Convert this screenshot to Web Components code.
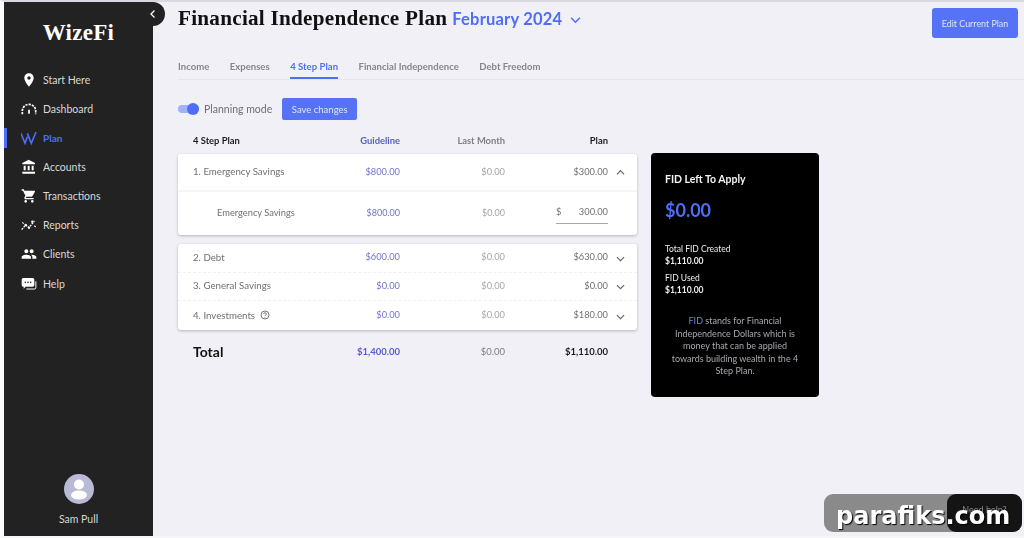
<!DOCTYPE html>
<html>
<head>
<meta charset="utf-8">
<title>WizeFi</title>
<style>
	html, body { margin: 0; height: 100%; }
	body {
		background: #f0f0f6;
		font-family: "Lato", "Liberation Sans", sans-serif;
		overflow: hidden;
	}
</style>
</head>
<body>
<wf-app>
	<wf-sidebar slot="side" user="Sam Pull">
		<wf-nav-item icon="pin">Start Here</wf-nav-item>
		<wf-nav-item icon="gauge">Dashboard</wf-nav-item>
		<wf-nav-item icon="logo" active>Plan</wf-nav-item>
		<wf-nav-item icon="bank">Accounts</wf-nav-item>
		<wf-nav-item icon="cart">Transactions</wf-nav-item>
		<wf-nav-item icon="chart">Reports</wf-nav-item>
		<wf-nav-item icon="people">Clients</wf-nav-item>
		<wf-nav-item icon="chat">Help</wf-nav-item>
	</wf-sidebar>
	<wf-page-header></wf-page-header>
	<wf-tabs></wf-tabs>
	<wf-toolbar></wf-toolbar>
	<div class="content" slot="content">
		<wf-plan-table></wf-plan-table>
		<wf-fid-card></wf-fid-card>
	</div>
</wf-app>
<wf-watermark></wf-watermark>

<script>
const ICONS = {
	pin: `<path fill="#fff" d="M12 2C8.13 2 5 5.13 5 9c0 5.25 7 13 7 13s7-7.75 7-13c0-3.87-3.13-7-7-7zm0 9.5c-1.38 0-2.5-1.12-2.5-2.5s1.12-2.5 2.5-2.5 2.5 1.12 2.5 2.5-1.12 2.5-2.5 2.5z"/>`,
	gauge: `<path fill="none" stroke="#fff" stroke-width="2.6" stroke-dasharray="3.4 1.6" d="M2 20v-5a10 10 0 0 1 20 0v5"/><path fill="none" stroke="#fff" stroke-width="2.6" d="M12 13v6"/>`,
	logo: `<path fill="none" stroke="#4f6ef7" stroke-width="2.4" d="M0 5l6 15 3.500-10M9.500 5l6 15 7-17"/>`,
	bank: `<path fill="#fff" d="M4 10v7h3v-7H4zm6 0v7h3v-7h-3zM2 22h19v-3H2v3zm14-12v7h3v-7h-3zm-4.500-9L2 6v2h19V6l-9.500-5z"/>`,
	cart: `<path fill="#fff" d="M7 18c-1.100 0-1.990.9-1.990 2S5.900 22 7 22s2-.9 2-2-.9-2-2-2zM1 2v2h2l3.600 7.590-1.350 2.450c-.16.28-.25.61-.25.96 0 1.100.9 2 2 2h12v-2H7.420c-.14 0-.25-.11-.25-.25l.03-.12.9-1.630h7.450c.75 0 1.410-.41 1.750-1.030l3.580-6.490c.08-.14.12-.31.12-.48 0-.55-.45-1-1-1H5.210l-.94-2H1zM17 18c-1.100 0-1.990.9-1.990 2s.89 2 1.990 2 2-.9 2-2-.9-2-2-2z"/>`,
	chart: `<path fill="none" stroke="#fff" stroke-width="2" stroke-dasharray="3 1.500" d="M1 19l6-7 5 4 8-10"/><circle cx="7" cy="12" r="1.800" fill="#fff"/><circle cx="12" cy="16" r="1.800" fill="#fff"/><circle cx="17" cy="7" r="1.800" fill="#fff"/><path stroke="#fff" stroke-width="1.600" d="M2 8l2 2M22 15l-2-2"/>`,
	people: `<path fill="#fff" d="M16 11c1.660 0 2.990-1.340 2.990-3S17.660 5 16 5c-1.660 0-3 1.340-3 3s1.340 3 3 3zm-8 0c1.660 0 2.990-1.340 2.990-3S9.660 5 8 5C6.340 5 5 6.340 5 8s1.340 3 3 3zm0 2c-2.330 0-7 1.170-7 3.500V19h14v-2.500c0-2.330-4.670-3.500-7-3.500zm8 0c-.29 0-.62.02-.97.05 1.160.84 1.970 1.970 1.970 3.450V19h6v-2.500c0-2.330-4.670-3.500-7-3.500z"/>`,
	chat: `<path fill="#fff" d="M3.500 3h14A2.500 2.500 0 0 1 20 5.500v8a2.500 2.500 0 0 1-2.500 2.500H7l-3 3v-3.100A2.500 2.500 0 0 1 1 13.500v-8A2.500 2.500 0 0 1 3.500 3z"/><path fill="none" stroke="#fff" stroke-width="1.500" d="M22.300 8v9.500a2 2 0 0 1-2 2H8"/><g fill="#222"><circle cx="6.500" cy="9.500" r="1.200"/><circle cx="10.500" cy="9.500" r="1.200"/><circle cx="14.500" cy="9.500" r="1.200"/></g>`
};

const CHEVRON = (dir, size = 9, color = "#666") => {
	const d = { up: "M1 7l4-4 4 4", down: "M1 3.500l4 4 4-4", left: "M6.500 1.500L3 5l3.500 3.500" }[dir];
	return `<svg width="${size}" height="${size}" viewBox="0 0 10 10"><path fill="none" stroke="${color}" stroke-width="1.300" d="${d}"/></svg>`;
};

// shell: sidebar on the left, everything else in a column
class WfApp extends HTMLElement {
	constructor() {
		super();
		this.attachShadow({ mode: "open" }).innerHTML = `
			<style>
				:host {
					display: flex;
					height: 538px;
					box-sizing: border-box;
					border-top: 2px solid #d8d8df;
					border-left: 4px solid #fbfbfd;
					border-bottom: 2px solid #f6f6f9;
					filter: blur(.35px);
				}
				main { flex: 1; min-width: 0; display: flex; flex-direction: column; }
				::slotted(.content) { display: flex; gap: 14px; align-items: flex-start; padding-left: 25px; }
			</style>
			<slot name="side"></slot>
			<main><slot></slot><slot name="content"></slot></main>`;
	}
}

class WfSidebar extends HTMLElement {
	constructor() {
		super();
		const user = this.getAttribute("user");
		this.attachShadow({ mode: "open" }).innerHTML = `
			<style>
				:host {
					display: flex;
					flex-direction: column;
					position: relative;
					flex: 0 0 149px;
					background: #222222;
					color: #e8e8e8;
				}
				.collapse {
					position: absolute;
					top: 0;
					right: -12px;
					width: 24px;
					height: 24px;
					border-radius: 0 12px 12px 0;
					background: #222222;
					display: flex;
					align-items: center;
					justify-content: center;
				}
				.brand {
					font: 700 23px/1 "Liberation Serif", serif;
					color: #fff;
					text-align: center;
					margin: 19px 0 21px;
					letter-spacing: .3px;
				}
				nav { display: flex; flex-direction: column; }
				.user {
					margin-top: auto;
					padding-bottom: 11px;
					display: flex;
					flex-direction: column;
					align-items: center;
					gap: 9px;
					font-size: 10.500px;
					color: #d6d6d6;
				}
				.avatar { width: 30px; height: 30px; display: block; }
			</style>
			<div class="collapse">${CHEVRON("left", 10, "#fff")}</div>
			<div class="brand">WizeFi</div>
			<nav><slot></slot></nav>
			<div class="user">
				<svg class="avatar" viewBox="0 0 30 30">
					<circle cx="15" cy="15" r="15" fill="#b9bbd6"/>
					<circle cx="15" cy="10.500" r="5" fill="#fff"/>
					<ellipse cx="15" cy="21" rx="8" ry="4.500" fill="#fff"/>
				</svg>
				<span>${user}</span>
			</div>`;
	}
}

class WfNavItem extends HTMLElement {
	constructor() {
		super();
		const icon = this.getAttribute("icon");
		this.attachShadow({ mode: "open" }).innerHTML = `
			<style>
				:host {
					display: flex;
					align-items: center;
					gap: 6px;
					height: 29.150px;
					padding-left: 17px;
					font-size: 10.500px;
					color: #d9d9d9;
					box-sizing: border-box;
				}
				:host([active]) {
					color: #4f6ef7;
					font-weight: 700;
					font-size: 10px;
					background: linear-gradient(#4f6ef7, #4f6ef7) left center / 3px 20px no-repeat;
				}
				svg { width: 16px; height: 16px; flex: none; }
			</style>
			<svg viewBox="0 0 24 24">${ICONS[icon]}</svg>
			<slot></slot>`;
	}
}

class WfPageHeader extends HTMLElement {
	constructor() {
		super();
		this.attachShadow({ mode: "open" }).innerHTML = `
			<style>
				:host {
					display: flex;
					align-items: flex-start;
					justify-content: space-between;
					height: 44px;
					padding: 3px 6px 0 25px;
				}
				.title { display: flex; align-items: baseline; gap: 5px; }
				h1 {
					margin: 0;
					font: 700 21.200px/26px "Liberation Serif", serif;
					color: #111;
					letter-spacing: .25px;
				}
				.month {
					font-size: 16.500px;
					font-weight: 700;
					color: #4f6ef7;
					letter-spacing: .2px;
				}
				.chev { margin-left: 3px; }
				button {
					width: 86px;
					height: 30px;
					margin-top: 3px;
					border: 0;
					border-radius: 3px;
					background: #5673f8;
					color: #dfe4ff;
					font: 400 8.900px "Lato", sans-serif;
					padding: 0;
				}
			</style>
			<div class="title">
				<h1>Financial Independence Plan</h1>
				<span class="month">February 2024</span>
				<span class="chev">${CHEVRON("down", 11, "#4f6ef7")}</span>
			</div>
			<button>Edit Current Plan</button>`;
	}
}

class WfTabs extends HTMLElement {
	constructor() {
		super();
		const tabs = ["Income", "Expenses", "4 Step Plan", "Financial Independence", "Debt Freedom"];
		this.attachShadow({ mode: "open" }).innerHTML = `
			<style>
				:host {
					display: flex;
					gap: 20.500px;
					height: 30px;
					margin-left: 25px;
					border-bottom: 1px solid #e6e6ec;
					font-size: 9.500px;
					font-weight: 700;
					color: #85858c;
					letter-spacing: .03px;
				}
				span { padding-top: 12px; height: 16px; line-height: 12px; }
				.on { color: #4f6ef7; border-bottom: 2px solid #4f6ef7; }
			</style>
			${tabs.map(t => `<span class="${t === "4 Step Plan" ? "on" : ""}">${t}</span>`).join("")}`;
	}
}

class WfToolbar extends HTMLElement {
	constructor() {
		super();
		this.attachShadow({ mode: "open" }).innerHTML = `
			<style>
				:host {
					display: flex;
					align-items: center;
					height: 22px;
					margin: 18px 0 0 25px;
					font-size: 10.500px;
					color: #6e6e74;
				}
				.track {
					position: relative;
					width: 21px;
					height: 8px;
					border-radius: 4px;
					background: #a3b2f6;
					margin-right: 5px;
				}
				.thumb {
					position: absolute;
					right: 0;
					top: -2px;
					width: 12px;
					height: 12px;
					border-radius: 50%;
					background: #4f6ef7;
				}
				button {
					width: 75px;
					height: 22px;
					margin-left: 10px;
					border: 0;
					border-radius: 2px;
					background: #5673f8;
					color: #e1e6ff;
					font: 400 9.500px "Lato", sans-serif;
					padding: 0;
				}
			</style>
			<span class="track"><span class="thumb"></span></span>
			<span>Planning mode</span>
			<button>Save changes</button>`;
	}
}

class WfPlanRow extends HTMLElement {
	constructor() {
		super();
		const a = n => this.getAttribute(n) || "";
		const kind = a("kind");
		const help = this.hasAttribute("help")
			? `<svg class="help" width="10" height="10" viewBox="0 0 10 10"><circle cx="5" cy="5" r="4" fill="none" stroke="#555" stroke-width=".8"/><path fill="none" stroke="#555" stroke-width=".8" d="M3.700 4a1.300 1.300 0 1 1 1.800 1.200c-.4.2-.5.4-.5.8"/><circle cx="5" cy="7.300" r=".5" fill="#555"/></svg>`
			: "";
		const plan = kind === "sub"
			? `<span class="input"><i>$</i><b>${a("plan")}</b></span>`
			: `<span class="num plan">${a("plan")}</span>`;
		const chev = a("chev") ? CHEVRON(a("chev")) : "";
		this.attachShadow({ mode: "open" }).innerHTML = `
			<style>
				:host {
					display: grid;
					grid-template-columns: 107px 100px 105px 103px 29px;
					align-items: center;
					box-sizing: border-box;
					padding: 0 0 2px 15px;
					height: 28.670px;
					font-size: 9.700px;
					color: #6f6f75;
				}
				:host([kind="open"]) { height: 38px; border-bottom: 2px solid #f5f5f8; }
				:host([kind="sub"]) { height: 43px; }
				:host([line]) { border-bottom: 1px dashed #f0f0f3; }
				.label { white-space: nowrap; display: flex; align-items: center; gap: 5px; }
				:host([kind="sub"]) .label { padding-left: 24px; font-size: 9.300px; }
				.num { text-align: right; font-size: 9.300px; }
				.guide { color: #7272cf; }
				.last { color: #a6a6ab; }
				:host([kind="sub"]) .guide, :host([kind="sub"]) .last { font-size: 9px; }
				.input {
					justify-self: end;
					width: 52px;
					height: 17px;
					margin-top: 5px;
					display: flex;
					justify-content: space-between;
					border-bottom: 1px solid #aaa;
					font-size: 9.300px;
				}
				.input i { font-style: normal; }
				.input b { font-weight: 400; }
				.chev { display: flex; justify-content: center; padding: 3px 4px 0 0; }
			</style>
			<span class="label">${a("label")}${help}</span>
			<span class="num guide">${a("guide")}</span>
			<span class="num last">${a("last")}</span>
			${plan}
			<span class="chev">${chev}</span>`;
	}
}

class WfPlanTable extends HTMLElement {
	constructor() {
		super();
		this.attachShadow({ mode: "open" }).innerHTML = `
			<style>
				:host { display: block; width: 459px; margin-top: 7px; }
				.cols, .total {
					display: grid;
					grid-template-columns: 107px 100px 105px 103px 29px;
					padding-left: 15px;
					align-items: center;
				}
				.cols { height: 27px; font-size: 9.400px; font-weight: 700; }
				.r { text-align: right; }
				.cols .g { color: #5a5ad0; }
				.cols .l { color: #7e7e84; }
				.cols .p, .cols .t { color: #1b1b1f; }
				.card {
					background: #fff;
					border-radius: 3px;
					box-shadow: 0 1px 3px rgba(0,0,0,.25);
					margin-bottom: 9px;
				}
				.total { height: 36px; margin-top: -5px; font-size: 9.500px; font-weight: 700; }
				.total .t { font-size: 14px; color: #111; }
				.total .g { color: #5a5ad0; }
				.total .l { color: #7e7e84; font-weight: 400; }
				.total .p { color: #1b1b1f; }
			</style>
			<div class="cols">
				<span class="t">4 Step Plan</span><span class="r g">Guideline</span><span class="r l">Last Month</span><span class="r p">Plan</span>
			</div>
			<div class="card">
				<wf-plan-row kind="open" label="1. Emergency Savings" guide="$800.00" last="$0.00" plan="$300.00" chev="up"></wf-plan-row>
				<wf-plan-row kind="sub" label="Emergency Savings" guide="$800.00" last="$0.00" plan="300.00"></wf-plan-row>
			</div>
			<div class="card">
				<wf-plan-row line label="2. Debt" guide="$600.00" last="$0.00" plan="$630.00" chev="down"></wf-plan-row>
				<wf-plan-row line label="3. General Savings" guide="$0.00" last="$0.00" plan="$0.00" chev="down"></wf-plan-row>
				<wf-plan-row help label="4. Investments" guide="$0.00" last="$0.00" plan="$180.00" chev="down"></wf-plan-row>
			</div>
			<div class="total">
				<span class="t">Total</span><span class="r g">$1,400.00</span><span class="r l">$0.00</span><span class="r p">$1,110.00</span>
			</div>`;
	}
}

class WfFidCard extends HTMLElement {
	constructor() {
		super();
		this.attachShadow({ mode: "open" }).innerHTML = `
			<style>
				:host {
					display: block;
					box-sizing: border-box;
					width: 168px;
					height: 244px;
					margin-top: 33px;
					padding: 20px 14px 0;
					background: #000;
					border-radius: 4px;
					color: #eee;
					font-size: 8.500px;
				}
				h3 { margin: 0; font-size: 10.500px; line-height: 13px; font-weight: 700; color: #f4f4f4; }
				.amount { margin: 13px 0 23px; font-size: 18px; line-height: 22px; font-weight: 700; color: #4f6ef7; }
				.stat { line-height: 11.500px; margin-bottom: 6px; }
				.stat b { display: block; font-weight: 700; }
				p {
					margin: 19px 0 0;
					text-align: center;
					font-size: 9px;
					line-height: 12.500px;
					color: #a8a8ae;
				}
				p span { color: #7080e0; }
			</style>
			<h3>FID Left To Apply</h3>
			<div class="amount">$0.00</div>
			<div class="stat">Total FID Created<b>$1,110.00</b></div>
			<div class="stat">FID Used<b>$1,110.00</b></div>
			<p><span>FID</span> stands for Financial<br>Independence Dollars which is<br>money that can be applied<br>towards building wealth in the 4<br>Step Plan.</p>`;
	}
}

// stamp over the bottom right corner
class WfWatermark extends HTMLElement {
	constructor() {
		super();
		this.attachShadow({ mode: "open" }).innerHTML = `
			<style>
				:host {
					position: fixed;
					left: 824px;
					top: 494px;
					width: 198px;
					height: 38px;
					border-radius: 9px;
					background: #8a8a8a;
					display: block;
				}
				.help {
					position: absolute;
					right: 0;
					top: 0;
					width: 75px;
					height: 38px;
					border-radius: 9px;
					background: #141414;
					color: #8a8a8a;
					font-size: 9px;
					text-align: center;
					line-height: 32px;
				}
				.mark {
					position: absolute;
					left: 12px;
					top: 8px;
					font: 700 24px/28px "DejaVu Sans", sans-serif;
					color: #fff;
					text-shadow: 1px 1px 1px #000;
					white-space: nowrap;
				}
			</style>
			<div class="help">Need help?</div>
			<div class="mark">parafiks.com</div>`;
	}
}

customElements.define("wf-app", WfApp);
customElements.define("wf-sidebar", WfSidebar);
customElements.define("wf-nav-item", WfNavItem);
customElements.define("wf-page-header", WfPageHeader);
customElements.define("wf-tabs", WfTabs);
customElements.define("wf-toolbar", WfToolbar);
customElements.define("wf-plan-row", WfPlanRow);
customElements.define("wf-plan-table", WfPlanTable);
customElements.define("wf-fid-card", WfFidCard);
customElements.define("wf-watermark", WfWatermark);
</script>
</body>
</html>
